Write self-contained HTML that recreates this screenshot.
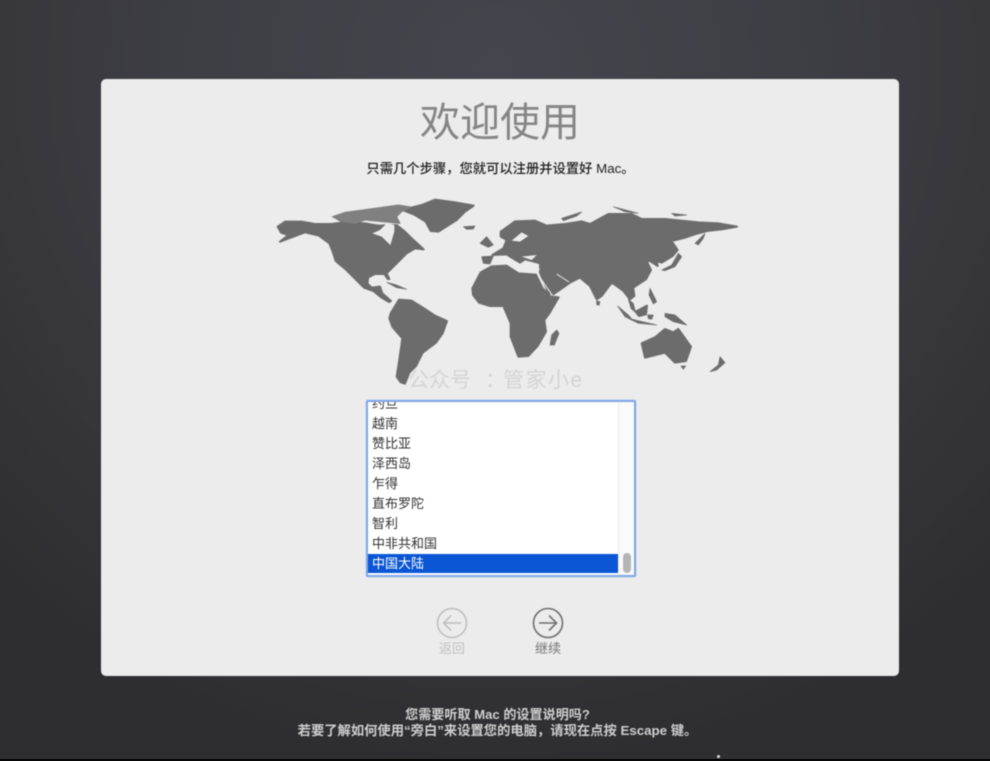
<!DOCTYPE html>
<html lang="zh-CN">
<head>
<meta charset="utf-8">
<title>欢迎使用</title>
<style>
html,body{margin:0;padding:0;width:990px;height:761px;overflow:hidden;background:#2e2e33}
body{position:relative;font-family:"Liberation Sans","Noto Sans CJK SC",sans-serif}
#bg{position:absolute;inset:0;background:radial-gradient(ellipse 720px 700px at 50% 70px,#45454d 0,#3d3d44 45%,#343438 80%,#2e2e31 100%)}
#strip{position:absolute;left:0;top:759px;width:990px;height:2px;background:#080808}
#card{position:absolute;left:101px;top:79px;width:798px;height:597px;background:#ececec;border-radius:5px;filter:blur(.4px)}
.t{position:absolute;white-space:nowrap;line-height:1;filter:blur(.45px)}
.c{transform:translateX(-50%)}
#title{left:500px;top:103px;font-size:40px;color:#858585}
#sub{left:500.5px;top:161.5px;font-size:13.3px;color:#1f1f1f;font-weight:500}
.wm{font-size:21px;color:#d4d4d4;top:370px}
#map{position:absolute;left:0;top:0;filter:blur(.5px)}
#list{position:absolute;left:366px;top:400px;width:270px;height:177px;box-sizing:border-box;border:2px solid #7fa6e6;border-radius:2px;background:#fff;overflow:hidden;filter:blur(.4px);box-shadow:0 0 1px #7fa6e6}
#track{position:absolute;left:250px;top:0;width:16px;height:173px;background:#fafafa;border-left:1px solid #ececec;box-sizing:border-box}
#sel{position:absolute;left:0;top:152px;width:250px;height:19px;background:#0a56d4}
#thumb{position:absolute;left:255px;top:151px;width:8px;height:20px;border-radius:4px;background:#b5b5b5}
.r{position:absolute;left:4px;font-size:13px;line-height:20px;height:20px;color:#333;white-space:nowrap}
#back,#next{font-size:13px}
#back{left:452px;top:642px;color:#c0c0c0}
#next{left:548px;top:642px;color:#777}
#l1,#l2{color:#cfcfcf;font-weight:bold}
#l1{left:497.5px;top:708px;font-size:13.1px}
#l2{left:497.5px;top:724px;font-size:13.3px}
.land{fill:#6c6c6c;stroke:#6c6c6c;stroke-width:6;stroke-linejoin:round}
.thin{stroke-width:2}
</style>
</head>
<body>
<div id="bg"></div>
<div id="strip"></div>
<div id="card"></div>
<div class="t c" id="title">欢迎使用</div>
<div class="t c" id="sub">只需几个步骤&#xFF0C;您就可以注册并设置好 Mac。</div>

<svg id="map" width="990" height="761" viewBox="0 0 990 761">
<g transform="translate(265 195) scale(.33333)">
<g class="land">
<path d="M38 95L60 80L110 80L150 87L200 87L250 80L300 85L340 92L395 90L420 110L440 130L462 150L476 163L450 160L425 175L405 195L385 215L365 235L373 252L368 252L358 237L330 237L310 247L307 265L320 278L345 275L352 295L378 318L372 321L350 308L325 288L297 278L272 253L242 223L212 198L203 170L193 145L162 122L120 112L85 125L45 140L70 120L48 113Z"/>
<path d="M412 45L470 30L510 14L570 22L626 32L600 50L575 75L520 110L497 108L482 80L450 60Z"/>
<path class="thin" d="M595 95L630 93L625 102L605 103Z"/>
<path class="thin" d="M365 262L395 270L425 283L395 278Z"/>
<path d="M377 355L402 314L440 317L480 342L510 362L546 378L533 415L513 443L473 473L453 513L433 533L420 566L407 562L395 545L402 500L412 430L382 395L373 370Z"/>
</g>
<g fill="#808080" stroke="#808080" stroke-width="3" stroke-linejoin="round">
<path d="M202 65L240 52L300 44L400 30L438 36L410 50L395 65L405 85L350 80L300 75L270 85L225 78Z"/>
</g>
<path d="M322 115L345 105L365 85L388 90L388 110L376 150L350 125Z" fill="#ececec"/>
</g>
<g transform="translate(465 200) scale(.33333)">
<g class="land">
<path d="M22 265L47 217L80 199L125 197L160 220L213 224L233 265L258 290L281 292L253 340L238 360L243 395L218 438L190 468L160 470L137 410L137 370L115 318L75 318L42 308L24 285Z"/>
<path d="M82 165L115 145L125 120L107 110L107 95L150 64L210 62L245 77L300 72L350 64L375 72L430 42L500 42L530 57L600 57L700 67L760 70L816 80L770 88L725 93L690 103L660 113L620 123L638 150L623 168L590 188L575 183L578 198L555 183L545 183L558 210L543 238L520 253L505 263L508 288L495 298L475 273L455 258L440 248L410 288L395 298L375 258L345 233L315 248L265 283L250 278L225 218L225 190L180 178L165 188L140 173L125 163Z"/>
<path class="thin" d="M50 170L85 168L75 192L55 190Z"/>
<path class="thin" d="M45 130L65 110L85 135L70 142Z"/>
<path class="thin" d="M490 298L505 310L512 338L498 325Z"/>
<path class="thin" d="M395 302L405 305L402 316L395 314Z"/>
<path class="thin" d="M290 55L350 36L335 48L295 62Z"/>
<path class="thin" d="M445 20L520 40L480 35Z"/>
<path class="thin" d="M620 40L665 45L630 48Z"/>
<path class="thin" d="M690 130L720 100L715 115L700 135Z"/>
<path class="thin" d="M590 210L620 195L640 160L650 170L630 200L600 212Z"/>
<path class="thin" d="M458 318L490 345L505 362L480 350Z"/>
<path class="thin" d="M490 355L575 375L520 370Z"/>
<path d="M512 335L546 317L543 343L522 348Z"/>
<path class="thin" d="M548 345L565 345L560 358L550 356Z"/>
<path class="thin" d="M555 265L575 305L565 312L552 285Z"/>
<path class="thin" d="M600 340L630 345L665 375L625 365L600 350Z"/>
<path class="thin" d="M275 390L282 400L268 435L255 435L260 405Z"/>
<path d="M530 430L570 412L600 387L625 397L640 387L678 440L663 483L630 488L600 458L540 473Z"/>
<path class="thin" d="M648 498L662 498L655 508Z"/>
<path class="thin" d="M735 515L760 495L765 470L780 488L755 510Z"/>
</g>
<g fill="none" stroke="#ececec" stroke-width="3">
<path d="M219 224L262 286"/>
<path d="M275 222L312 246"/>
<path d="M80 192L125 180L165 200L225 208"/>
</g>
<path d="M170 170L215 165L200 180Z" fill="#ececec"/>
<path d="M140 122L170 97L190 108L165 125Z" fill="#ececec"/>
</g>
</svg>
<div class="t wm" style="left:408px">公众号</div>
<div class="t wm" style="left:485px">&#xFF1A;</div>
<div class="t wm" style="left:503px;letter-spacing:1.5px">管家小e</div>

<div id="list">
  <div class="r" style="top:-8px">约旦</div>
  <div class="r" style="top:12px">越南</div>
  <div class="r" style="top:32px">赞比亚</div>
  <div class="r" style="top:52px">泽西岛</div>
  <div class="r" style="top:72px">乍得</div>
  <div class="r" style="top:92px">直布罗陀</div>
  <div class="r" style="top:112px">智利</div>
  <div class="r" style="top:132px">中非共和国</div>
  <div id="sel"></div>
  <div class="r" style="top:152px;color:#fff">中国大陆</div>
  <div id="track"></div>
  <div id="thumb"></div>
</div>

<svg style="position:absolute;left:0;top:0;filter:blur(.4px)" width="990" height="761" viewBox="0 0 990 761" fill="none">
  <g stroke="#bdbdbd" stroke-width="1.5">
    <circle cx="452" cy="623" r="14.5"/>
    <path d="M461 623H444M451 615.5L443.5 623L451 630.5"/>
  </g>
  <g stroke="#707070" stroke-width="1.6">
    <circle cx="548" cy="623" r="14.5"/>
    <path d="M539 623H556M549 615.5L556.5 623L549 630.5"/>
  </g>
  <circle cx="718.5" cy="756.5" r="1.5" fill="#ddd"/>
</svg>
<div class="t c" id="back">返回</div>
<div class="t c" id="next">继续</div>

<div class="t c" id="l1">您需要听取 Mac 的设置说明吗?</div>
<div class="t c" id="l2">若要了解如何使用“旁白”来设置您的电脑&#xFF0C;请现在点按 Escape 键。</div>
</body>
</html>
